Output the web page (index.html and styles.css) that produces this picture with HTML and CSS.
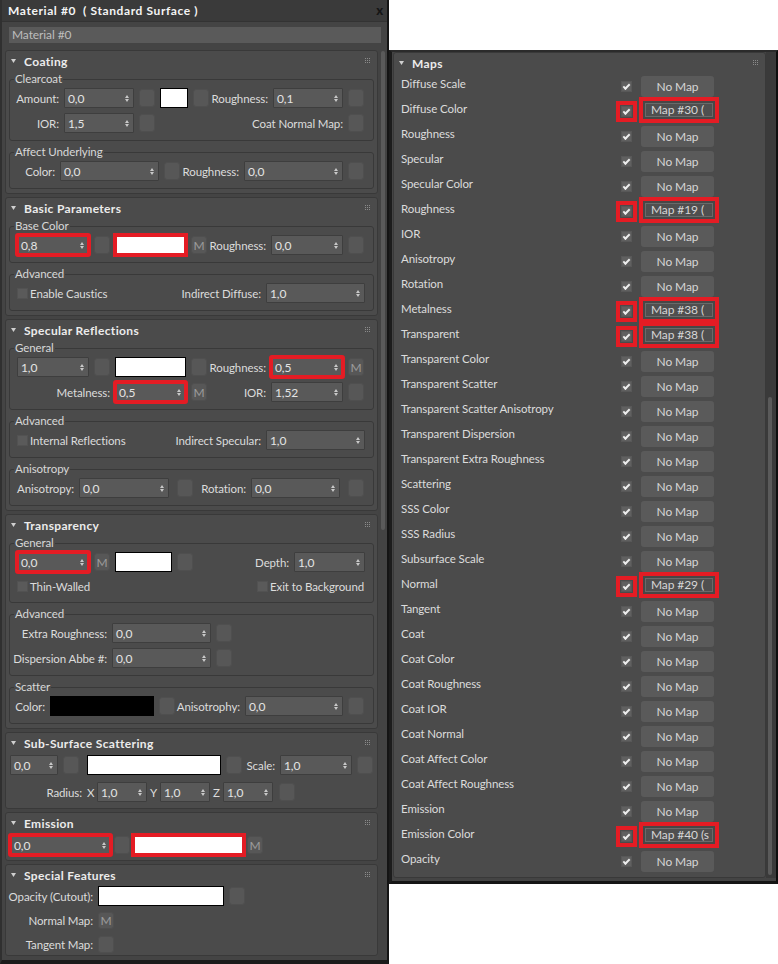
FILE: index.html
```html
<!DOCTYPE html>
<html>
<head>
<meta charset="utf-8">
<title>Material #0 ( Standard Surface )</title>
<link rel="stylesheet" href="styles.css">
</head>
<body>
<div class="win left">
  <div class="titlebar"><span class="ttl">Material #0  ( Standard Surface )</span><span class="close">x</span></div>
  <div class="namebar">Material #0</div>
  <div class="main">
    <div class="rollouts">

      <section class="ro">
        <div class="hdr"><svg class="tri" width="5" height="4" viewBox="0 0 5 4"><path d="M0 0H5L2.5 4Z" fill="#cfcfcf"/></svg><span>Coating</span><svg class="grip" width="5" height="5" viewBox="0 0 5 5"><path d="M0 0h1v1H0zM2 0h1v1H2zM4 0h1v1H4zM0 2h1v1H0zM2 2h1v1H2zM4 2h1v1H4zM0 4h1v1H0zM2 4h1v1H2zM4 4h1v1H4z" fill="#8b8b8b"/></svg></div>
        <fieldset class="grp"><legend>Clearcoat</legend>
          <div class="row">
            <span class="lb w49">Amount:</span>
            <div class="spin w70"><span>0,0</span><b class="ar"></b></div>
            <div class="btn"></div>
            <div class="sw w28"></div>
            <div class="btn"></div>
            <span class="lb w54">Roughness:</span>
            <div class="spin w70"><span>0,1</span><b class="ar"></b></div>
            <div class="btn"></div>
          </div>
          <div class="row">
            <span class="lb w49">IOR:</span>
            <div class="spin w70"><span>1,5</span><b class="ar"></b></div>
            <div class="btn"></div>
            <span class="lb w183">Coat Normal Map:</span>
            <div class="btn"></div>
          </div>
        </fieldset>
        <fieldset class="grp"><legend>Affect Underlying</legend>
          <div class="row">
            <span class="lb w45">Color:</span>
            <div class="spin w99"><span>0,0</span><b class="ar"></b></div>
            <div class="btn"></div>
            <span class="lb w54">Roughness:</span>
            <div class="spin w99"><span>0,0</span><b class="ar"></b></div>
            <div class="btn"></div>
          </div>
        </fieldset>
      </section>

      <section class="ro">
        <div class="hdr"><svg class="tri" width="5" height="4" viewBox="0 0 5 4"><path d="M0 0H5L2.5 4Z" fill="#cfcfcf"/></svg><span>Basic Parameters</span><svg class="grip" width="5" height="5" viewBox="0 0 5 5"><path d="M0 0h1v1H0zM2 0h1v1H2zM4 0h1v1H4zM0 2h1v1H0zM2 2h1v1H2zM4 2h1v1H4zM0 4h1v1H0zM2 4h1v1H2zM4 4h1v1H4z" fill="#8b8b8b"/></svg></div>
        <fieldset class="grp"><legend>Base Color</legend>
          <div class="row pl7">
            <div class="spin w72 red"><span>0,8</span><b class="ar"></b></div>
            <div class="btn"></div>
            <div class="sw w71 red"></div>
            <div class="btn">M</div>
            <span class="lb w54">Roughness:</span>
            <div class="spin w72"><span>0,0</span><b class="ar"></b></div>
            <div class="btn"></div>
          </div>
        </fieldset>
        <fieldset class="grp"><legend>Advanced</legend>
          <div class="row pl7 pr8">
            <span class="cbl"><i class="cb"></i>Enable Caustics</span>
            <span class="lb mla">Indirect Diffuse:</span>
            <div class="spin w99"><span>1,0</span><b class="ar"></b></div>
          </div>
        </fieldset>
      </section>

      <section class="ro">
        <div class="hdr"><svg class="tri" width="5" height="4" viewBox="0 0 5 4"><path d="M0 0H5L2.5 4Z" fill="#cfcfcf"/></svg><span>Specular Reflections</span><svg class="grip" width="5" height="5" viewBox="0 0 5 5"><path d="M0 0h1v1H0zM2 0h1v1H2zM4 0h1v1H4zM0 2h1v1H0zM2 2h1v1H2zM4 2h1v1H4zM0 4h1v1H0zM2 4h1v1H2zM4 4h1v1H4z" fill="#8b8b8b"/></svg></div>
        <fieldset class="grp"><legend>General</legend>
          <div class="row pl7">
            <div class="spin w72"><span>1,0</span><b class="ar"></b></div>
            <div class="btn"></div>
            <div class="sw w71"></div>
            <div class="btn"></div>
            <span class="lb w54">Roughness:</span>
            <div class="spin w72 red"><span>0,5</span><b class="ar"></b></div>
            <div class="btn">M</div>
          </div>
          <div class="row">
            <span class="lb w100">Metalness:</span>
            <div class="spin w71 red"><span>0,5</span><b class="ar"></b></div>
            <div class="btn">M</div>
            <span class="lb w54">IOR:</span>
            <div class="spin w72"><span>1,52</span><b class="ar"></b></div>
            <div class="btn"></div>
          </div>
        </fieldset>
        <fieldset class="grp"><legend>Advanced</legend>
          <div class="row pl7 pr8">
            <span class="cbl"><i class="cb"></i>Internal Reflections</span>
            <span class="lb mla">Indirect Specular:</span>
            <div class="spin w99"><span>1,0</span><b class="ar"></b></div>
          </div>
        </fieldset>
        <fieldset class="grp"><legend>Anisotropy</legend>
          <div class="row">
            <span class="lb w64">Anisotropy:</span>
            <div class="spin w90"><span>0,0</span><b class="ar"></b></div>
            <div class="btn ml3"></div>
            <span class="lb w48">Rotation:</span>
            <div class="spin w89"><span>0,0</span><b class="ar"></b></div>
            <div class="btn ml3"></div>
          </div>
        </fieldset>
      </section>

      <section class="ro">
        <div class="hdr"><svg class="tri" width="5" height="4" viewBox="0 0 5 4"><path d="M0 0H5L2.5 4Z" fill="#cfcfcf"/></svg><span>Transparency</span><svg class="grip" width="5" height="5" viewBox="0 0 5 5"><path d="M0 0h1v1H0zM2 0h1v1H2zM4 0h1v1H4zM0 2h1v1H0zM2 2h1v1H2zM4 2h1v1H4zM0 4h1v1H0zM2 4h1v1H2zM4 4h1v1H4z" fill="#8b8b8b"/></svg></div>
        <fieldset class="grp"><legend>General</legend>
          <div class="row pl7 pr8">
            <div class="spin w72 red"><span>0,0</span><b class="ar"></b></div>
            <div class="btn">M</div>
            <div class="sw w57"></div>
            <div class="btn"></div>
            <span class="lb mla">Depth:</span>
            <div class="spin w71"><span>1,0</span><b class="ar"></b></div>
          </div>
          <div class="row h18">
            <span class="cbl w242 pl7"><i class="cb"></i>Thin-Walled</span>
            <span class="cbl"><i class="cb"></i>Exit to Background</span>
          </div>
        </fieldset>
        <fieldset class="grp"><legend>Advanced</legend>
          <div class="row">
            <span class="lb w97">Extra Roughness:</span>
            <div class="spin w99"><span>0,0</span><b class="ar"></b></div>
            <div class="btn"></div>
          </div>
          <div class="row">
            <span class="lb w97">Dispersion Abbe #:</span>
            <div class="spin w99"><span>0,0</span><b class="ar"></b></div>
            <div class="btn"></div>
          </div>
        </fieldset>
        <fieldset class="grp"><legend>Scatter</legend>
          <div class="row">
            <span class="lb w35">Color:</span>
            <div class="sw blk w104"></div>
            <div class="btn"></div>
            <span class="lb w60">Anisotrophy:</span>
            <div class="spin w98"><span>0,0</span><b class="ar"></b></div>
            <div class="btn"></div>
          </div>
        </fieldset>
      </section>

      <section class="ro pb6">
        <div class="hdr"><svg class="tri" width="5" height="4" viewBox="0 0 5 4"><path d="M0 0H5L2.5 4Z" fill="#cfcfcf"/></svg><span>Sub-Surface Scattering</span><svg class="grip" width="5" height="5" viewBox="0 0 5 5"><path d="M0 0h1v1H0zM2 0h1v1H2zM4 0h1v1H4zM0 2h1v1H0zM2 2h1v1H2zM4 2h1v1H4zM0 4h1v1H0zM2 4h1v1H2zM4 4h1v1H4z" fill="#8b8b8b"/></svg></div>
        <div class="row pl4 mt1">
          <div class="spin w48"><span>0,0</span><b class="ar"></b></div>
          <div class="btn"></div>
          <div class="sw w134 ml3"></div>
          <div class="btn"></div>
          <span class="lb w28">Scale:</span>
          <div class="spin w72"><span>1,0</span><b class="ar"></b></div>
          <div class="btn"></div>
        </div>
        <div class="row pl4 g3 mt7">
          <span class="lb w74 pr2">Radius:</span>
          <span class="ax">X</span>
          <div class="spin w50"><span>1,0</span><b class="ar"></b></div>
          <span class="ax">Y</span>
          <div class="spin w50"><span>1,0</span><b class="ar"></b></div>
          <span class="ax">Z</span>
          <div class="spin w50"><span>1,0</span><b class="ar"></b></div>
          <div class="btn ml3"></div>
        </div>
      </section>

      <section class="ro pb5">
        <div class="hdr"><svg class="tri" width="5" height="4" viewBox="0 0 5 4"><path d="M0 0H5L2.5 4Z" fill="#cfcfcf"/></svg><span>Emission</span><svg class="grip" width="5" height="5" viewBox="0 0 5 5"><path d="M0 0h1v1H0zM2 0h1v1H2zM4 0h1v1H4zM0 2h1v1H0zM2 2h1v1H2zM4 2h1v1H4zM0 4h1v1H0zM2 4h1v1H2zM4 4h1v1H4z" fill="#8b8b8b"/></svg></div>
        <div class="row pl4 g3 mt1">
          <div class="spin w101 red"><span>0,0</span><b class="ar"></b></div>
          <div class="btn"></div>
          <div class="sw w111 red"></div>
          <div class="btn">M</div>
        </div>
      </section>

      <section class="ro pb1">
        <div class="hdr"><svg class="tri" width="5" height="4" viewBox="0 0 5 4"><path d="M0 0H5L2.5 4Z" fill="#cfcfcf"/></svg><span>Special Features</span><svg class="grip" width="5" height="5" viewBox="0 0 5 5"><path d="M0 0h1v1H0zM2 0h1v1H2zM4 0h1v1H4zM0 2h1v1H0zM2 2h1v1H2zM4 2h1v1H4zM0 4h1v1H0zM2 4h1v1H2zM4 4h1v1H4z" fill="#8b8b8b"/></svg></div>
        <div class="row pl2">
          <span class="lb w85">Opacity (Cutout):</span>
          <div class="sw w126"></div>
          <div class="btn"></div>
        </div>
        <div class="row pl2 h19">
          <span class="lb w85">Normal Map:</span>
          <div class="btn b17">M</div>
        </div>
        <div class="row pl2 h19">
          <span class="lb w85">Tangent Map:</span>
          <div class="btn b17"></div>
        </div>
      </section>

    </div>
    <div class="vscroll"><div class="thumb"></div></div>
  </div>
</div>

<div class="win right">
  <section class="ro">
    <div class="hdr"><svg class="tri" width="5" height="4" viewBox="0 0 5 4"><path d="M0 0H5L2.5 4Z" fill="#cfcfcf"/></svg><span>Maps</span><svg class="grip" width="5" height="5" viewBox="0 0 5 5"><path d="M0 0h1v1H0zM2 0h1v1H2zM4 0h1v1H4zM0 2h1v1H0zM2 2h1v1H2zM4 2h1v1H4zM0 4h1v1H0zM2 4h1v1H2zM4 4h1v1H4z" fill="#8b8b8b"/></svg></div>
    <div class="mrow"><span class="mlab">Diffuse Scale</span><span class="mchk"></span><span class="mbtn">No Map</span></div>
    <div class="mrow"><span class="mlab">Diffuse Color</span><span class="mchk sel"></span><span class="mbtn sel"><span>Map #30 (</span></span></div>
    <div class="mrow"><span class="mlab">Roughness</span><span class="mchk"></span><span class="mbtn">No Map</span></div>
    <div class="mrow"><span class="mlab">Specular</span><span class="mchk"></span><span class="mbtn">No Map</span></div>
    <div class="mrow"><span class="mlab">Specular Color</span><span class="mchk"></span><span class="mbtn">No Map</span></div>
    <div class="mrow"><span class="mlab">Roughness</span><span class="mchk sel"></span><span class="mbtn sel"><span>Map #19 (</span></span></div>
    <div class="mrow"><span class="mlab">IOR</span><span class="mchk"></span><span class="mbtn">No Map</span></div>
    <div class="mrow"><span class="mlab">Anisotropy</span><span class="mchk"></span><span class="mbtn">No Map</span></div>
    <div class="mrow"><span class="mlab">Rotation</span><span class="mchk"></span><span class="mbtn">No Map</span></div>
    <div class="mrow"><span class="mlab">Metalness</span><span class="mchk sel"></span><span class="mbtn sel"><span>Map #38 (</span></span></div>
    <div class="mrow"><span class="mlab">Transparent</span><span class="mchk sel"></span><span class="mbtn sel"><span>Map #38 (</span></span></div>
    <div class="mrow"><span class="mlab">Transparent Color</span><span class="mchk"></span><span class="mbtn">No Map</span></div>
    <div class="mrow"><span class="mlab">Transparent Scatter</span><span class="mchk"></span><span class="mbtn">No Map</span></div>
    <div class="mrow"><span class="mlab">Transparent Scatter Anisotropy</span><span class="mchk"></span><span class="mbtn">No Map</span></div>
    <div class="mrow"><span class="mlab">Transparent Dispersion</span><span class="mchk"></span><span class="mbtn">No Map</span></div>
    <div class="mrow"><span class="mlab">Transparent Extra Roughness</span><span class="mchk"></span><span class="mbtn">No Map</span></div>
    <div class="mrow"><span class="mlab">Scattering</span><span class="mchk"></span><span class="mbtn">No Map</span></div>
    <div class="mrow"><span class="mlab">SSS Color</span><span class="mchk"></span><span class="mbtn">No Map</span></div>
    <div class="mrow"><span class="mlab">SSS Radius</span><span class="mchk"></span><span class="mbtn">No Map</span></div>
    <div class="mrow"><span class="mlab">Subsurface Scale</span><span class="mchk"></span><span class="mbtn">No Map</span></div>
    <div class="mrow"><span class="mlab">Normal</span><span class="mchk sel"></span><span class="mbtn sel"><span>Map #29 (</span></span></div>
    <div class="mrow"><span class="mlab">Tangent</span><span class="mchk"></span><span class="mbtn">No Map</span></div>
    <div class="mrow"><span class="mlab">Coat</span><span class="mchk"></span><span class="mbtn">No Map</span></div>
    <div class="mrow"><span class="mlab">Coat Color</span><span class="mchk"></span><span class="mbtn">No Map</span></div>
    <div class="mrow"><span class="mlab">Coat Roughness</span><span class="mchk"></span><span class="mbtn">No Map</span></div>
    <div class="mrow"><span class="mlab">Coat IOR</span><span class="mchk"></span><span class="mbtn">No Map</span></div>
    <div class="mrow"><span class="mlab">Coat Normal</span><span class="mchk"></span><span class="mbtn">No Map</span></div>
    <div class="mrow"><span class="mlab">Coat Affect Color</span><span class="mchk"></span><span class="mbtn">No Map</span></div>
    <div class="mrow"><span class="mlab">Coat Affect Roughness</span><span class="mchk"></span><span class="mbtn">No Map</span></div>
    <div class="mrow"><span class="mlab">Emission</span><span class="mchk"></span><span class="mbtn">No Map</span></div>
    <div class="mrow"><span class="mlab">Emission Color</span><span class="mchk sel"></span><span class="mbtn sel"><span>Map #40 (s</span></span></div>
    <div class="mrow"><span class="mlab">Opacity</span><span class="mchk"></span><span class="mbtn">No Map</span></div>
  </section>
  <div class="vscroll"><div class="thumb"></div></div>
</div>
</body>
</html>
```
FILE: styles.css
```css
* { box-sizing: border-box; }
html, body { margin: 0; padding: 0; }
body {
  width: 778px; height: 964px; overflow: hidden;
  background: #fff;
  display: flex; align-items: flex-start;
  font-family: Lato, "Open Sans", sans-serif;
  font-size: 11.5px; line-height: 15px; letter-spacing: -0.1px;
  color: #dcdcdc;
}
.win { background: #444; }

/* ---------- left window ---------- */
.left {
  width: 389px; height: 964px; flex: none;
  border-left: 2px solid #303030;
  border-right: 2px solid #141414;
  border-bottom: 4px solid #1b1b1b;
  display: flex; flex-direction: column;
  overflow: hidden;
}
.titlebar {
  flex: none; height: 22px;
  background: #3a3a3a; border-bottom: 1px solid #333;
  display: flex; align-items: center; justify-content: space-between;
  padding: 0 4px 0 6px;
}
.ttl { font-size: 12px; font-weight: 700; color: #f4f4f4; letter-spacing: .6px; white-space: pre; }
.close { font-weight: 900; color: #151515; font-size: 13px; }
.namebar {
  flex: none; height: 16px; margin: 5px 6px 0 7px;
  background: #5a5a5a; color: #bdbdbd;
  padding-left: 3px; line-height: 16px; font-size: 12px;
}
.main { flex: 1; min-height: 0; display: flex; margin-top: 7px; }
.rollouts { width: 373px; margin-left: 3px; flex: none; }
.vscroll { flex: none; display: flex; flex-direction: column; }
.left .vscroll { width: 9px; background: #434343; }
.thumb { width: 4px; background: #5a5a5a; border-radius: 2px; flex: none; }
.left .thumb { margin: 1px 0 0 3px; height: 479px; }

/* ---------- rollouts ---------- */
.ro {
  background: #4b4b4b;
  border: 1px solid #393939; border-radius: 3px;
  margin-bottom: 3px; padding-bottom: 4px;
}
.ro.pb6 { padding-bottom: 6px; }
.ro.pb5 { padding-bottom: 5px; }
.ro.pb1 { padding-bottom: 1px; }
.hdr {
  height: 21px; display: flex; align-items: center;
  padding: 0 7px 0 5px;
  font-size: 12px; font-weight: 700; letter-spacing: .35px; color: #ececec;
}
.tri { flex: none; margin-right: 8px; transform: translateY(-1px); }
.grip { flex: none; margin-left: auto; transform: translateY(-1px); }

.grp {
  margin: 0 3px; padding: 2px 0 7px;
  border: 1px solid #393939; border-radius: 3px;
  min-width: 0;
}
.grp + .grp { margin-top: 4px; }
.grp legend { margin-left: 4px; padding: 0 1px; height: 14px; line-height: 14px; color: #d8d8d8; }

.row { display: flex; align-items: center; gap: 5px; height: 20px; white-space: nowrap; }
.row + .row { margin-top: 5px; }
.row.mt1 { margin-top: 1px; }
.row.mt7 { margin-top: 7px; }
.row.h18 { height: 18px; }
.row.h19 { height: 19px; }
.g3 { gap: 3px; }
.pl2 { padding-left: 2px; }
.pl4 { padding-left: 4px; }
.pl7 { padding-left: 7px; }
.pr8 { padding-right: 8px; }
.pr2 { padding-right: 2px; }
.ml3 { margin-left: 3px; }
.mla { margin-left: auto; }

.lb { display: flex; justify-content: flex-end; flex: none; white-space: nowrap; }
.ax { width: 7px; text-align: center; flex: none; }

.spin {
  flex: none; height: 20px;
  background: #595959; border: 1px solid #3e3e3e; border-radius: 1px;
  display: flex; align-items: center;
  padding: 0 4px 0 3px; color: #e4e4e4; font-size: 12px;
}
.spin span { flex: 1; }
.ar { display: flex; flex-direction: column; gap: 1px; flex: none; }
.ar::before, .ar::after {
  content: ""; width: 0; height: 0;
  border-left: 2px solid transparent; border-right: 2px solid transparent;
}
.ar::before { border-bottom: 3px solid #c9c9c9; }
.ar::after { border-top: 3px solid #c9c9c9; }

.btn {
  flex: none; width: 16px; height: 18px;
  background: #575757; border: 1px solid #4f4f4f; border-radius: 3px;
  display: flex; align-items: center; justify-content: center;
  color: #9c9c9c; font-size: 12px;
}
.btn.b17 { height: 17px; }
.sw { flex: none; height: 20px; background: #fff; border: 1px solid #000; }
.sw.blk { background: #000; }
.red { outline: 4px solid #e41c24; outline-offset: -2px; }

.cbl { display: flex; align-items: center; flex: none; }
.cb { width: 11px; height: 11px; background: #5a5a5a; border: 1px solid #525252; margin-right: 2px; flex: none; }

.w28 { width: 28px; } .w35 { width: 35px; } .w45 { width: 45px; } .w48 { width: 48px; }
.w49 { width: 49px; } .w50 { width: 50px; } .w54 { width: 54px; } .w57 { width: 57px; }
.w60 { width: 60px; } .w64 { width: 64px; } .w70 { width: 70px; } .w71 { width: 71px; }
.w72 { width: 72px; } .w74 { width: 74px; } .w85 { width: 85px; } .w89 { width: 89px; }
.w90 { width: 90px; } .w97 { width: 97px; } .w98 { width: 98px; } .w99 { width: 99px; }
.w100 { width: 100px; } .w101 { width: 101px; } .w104 { width: 104px; } .w111 { width: 111px; }
.w126 { width: 126px; } .w134 { width: 134px; } .w183 { width: 183px; } .w242 { width: 242px; }

/* ---------- right window (Maps) ---------- */
.right {
  width: 389px; flex: none; margin-top: 50px;
  border-top: 2px solid #2b2b2b;
  border-left: 3px solid #1c1c1c;
  border-right: 2px solid #0e0e0e;
  border-bottom: 3px solid #151515;
  padding: 0 0 3px 1px;
  display: flex; align-items: stretch;
}
.right .ro { width: 373px; flex: none; margin: 0; padding-bottom: 3px; }
.right .vscroll { width: 10px; background: #3a3a3a; }
.right .thumb { margin: 345px 0 0 2px; height: 478px; }

.mrow { display: flex; align-items: flex-start; height: 25px; padding-left: 7px; white-space: nowrap; }
.mlab { width: 220px; flex: none; margin-top: 2px; }
.mchk {
  width: 11px; height: 11px; margin-top: 7px; flex: none;
  background: #606060; border: 1px solid #585858;
  display: flex; align-items: center; justify-content: center;
}
.mchk::after {
  content: ""; width: 5px; height: 2px;
  border-left: 2px solid #eee; border-bottom: 2px solid #eee;
  transform: translateY(-1px) rotate(-45deg);
}
.mchk.sel { outline: 4px solid #e41c24; outline-offset: 1px; }
.mbtn {
  flex: none; width: 73px; height: 21px; margin: 2px 0 0 9px;
  background: #5a5a5a; border-radius: 3px;
  text-align: center; line-height: 21px; color: #d6d6d6; font-size: 12px;
}
.mbtn.sel {
  width: 80px; height: 26px; margin: -2px 0 0 7px;
  border: 4px solid #e41c24; border-radius: 0; padding: 2px;
  background: #474747; text-align: left; line-height: normal;
}
.mbtn.sel span {
  display: block; height: 100%;
  border: 1px solid #6a6a6a; background: #4f4f4f;
  padding-left: 5px; line-height: 12px;
}
```
